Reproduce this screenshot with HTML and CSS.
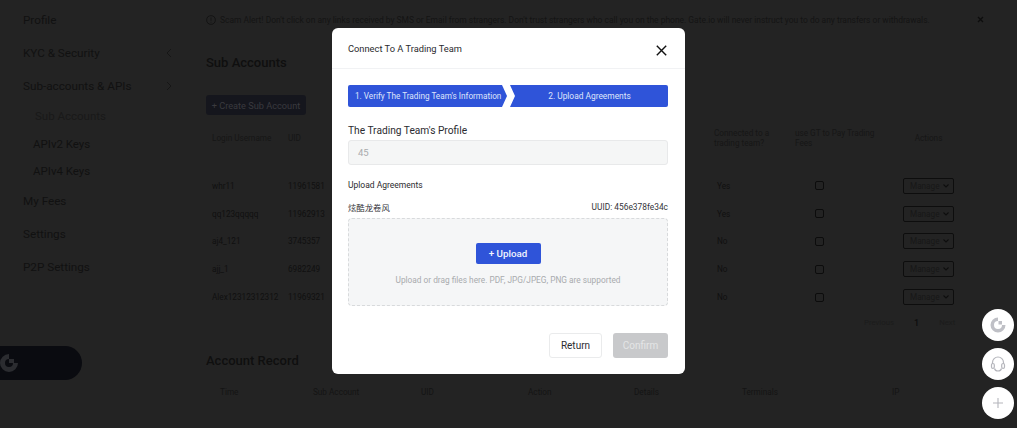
FILE: index.html
```html
<!DOCTYPE html>
<html lang="en">
<head>
<meta charset="utf-8">
<title>Sub Accounts</title>
<link rel="stylesheet" href="styles.css">
</head>
<body>
<div class="page">
  <nav class="sidebar">
    <a class="nav-item">Profile</a>
    <a class="nav-item">KYC &amp; Security<svg class="chev" width="6" height="10" viewBox="0 0 6 10"><path d="M5 1 1 5l4 4" fill="none" stroke="#161616" stroke-width="1"/></svg></a>
    <a class="nav-item">Sub-accounts &amp; APIs<svg class="chev" width="6" height="10" viewBox="0 0 6 10"><path d="M1 1l4 4-4 4" fill="none" stroke="#161616" stroke-width="1"/></svg></a>
    <div class="subnav">
      <a class="sub-item first">Sub Accounts</a>
      <a class="sub-item">APIv2 Keys</a>
      <a class="sub-item">APIv4 Keys</a>
    </div>
    <a class="nav-item">My Fees</a>
    <a class="nav-item">Settings</a>
    <a class="nav-item">P2P Settings</a>
  </nav>
  <main class="main">
    <div class="alert">
      <svg class="alert-icon" width="10" height="10" viewBox="0 0 10 10"><circle cx="5" cy="5" r="4.4" fill="none" stroke="#121212" stroke-width=".8"/><path d="M5 2.5v3.2M5 6.8v.8" stroke="#121212" stroke-width=".8"/></svg>
      <span class="alert-text">Scam Alert! Don't click on any links received by SMS or Email from strangers. Don't trust strangers who call you on the phone. Gate.io will never instruct you to do any transfers or withdrawals.</span>
      <svg class="alert-close" width="7" height="7" viewBox="0 0 7 7"><path d="M1 1l5 5M6 1 1 6" stroke="#0d0d0d" stroke-width="1.3"/></svg>
    </div>
    <h2 class="heading">Sub Accounts</h2>
    <button class="create">+ Create Sub Account</button>
    <div class="sub-table">
      <div class="row head">
        <span class="c-name">Login Username</span><span class="c-uid">UID</span>
        <span class="c-team">Connected to a trading team?</span><span class="c-gt">use GT to Pay Trading Fees</span><span class="c-act center">Actions</span>
      </div>
      <div class="row"><span class="c-name">whr11</span><span class="c-uid">11961581</span><span class="c-team ind">Yes</span><span class="c-gt"><i class="check"></i></span><span class="c-act"><span class="manage">Manage<svg width="6" height="4" viewBox="0 0 6 4"><path d="M.5.5 3 3 5.500.5" fill="none" stroke="#0e0e0e" stroke-width="1.100"/></svg></span></span></div>
      <div class="row"><span class="c-name">qq123qqqqq</span><span class="c-uid">11962913</span><span class="c-team ind">Yes</span><span class="c-gt"><i class="check"></i></span><span class="c-act"><span class="manage">Manage<svg width="6" height="4" viewBox="0 0 6 4"><path d="M.5.5 3 3 5.500.5" fill="none" stroke="#0e0e0e" stroke-width="1.100"/></svg></span></span></div>
      <div class="row"><span class="c-name">aj4_121</span><span class="c-uid">3745357</span><span class="c-team ind">No</span><span class="c-gt"><i class="check"></i></span><span class="c-act"><span class="manage">Manage<svg width="6" height="4" viewBox="0 0 6 4"><path d="M.5.5 3 3 5.500.5" fill="none" stroke="#0e0e0e" stroke-width="1.100"/></svg></span></span></div>
      <div class="row"><span class="c-name">ajj_1</span><span class="c-uid">6982249</span><span class="c-team ind">No</span><span class="c-gt"><i class="check"></i></span><span class="c-act"><span class="manage">Manage<svg width="6" height="4" viewBox="0 0 6 4"><path d="M.5.5 3 3 5.500.5" fill="none" stroke="#0e0e0e" stroke-width="1.100"/></svg></span></span></div>
      <div class="row"><span class="c-name">Alex12312312312</span><span class="c-uid">11969321</span><span class="c-team ind">No</span><span class="c-gt"><i class="check"></i></span><span class="c-act"><span class="manage">Manage<svg width="6" height="4" viewBox="0 0 6 4"><path d="M.5.5 3 3 5.500.5" fill="none" stroke="#0e0e0e" stroke-width="1.100"/></svg></span></span></div>
    </div>
    <div class="pager"><span>Previous</span><b>1</b><span>Next</span></div>
    <h2 class="heading record">Account Record</h2>
    <div class="record-head">
      <span>Time</span><span>Sub Account</span><span>UID</span><span>Action</span><span>Details</span><span>Terminals</span><span>IP</span>
    </div>
  </main>
</div>

<div class="pill">
  <svg width="22" height="22" viewBox="0 0 22 22"><path d="M11 20a9 9 0 1 1 0-18v5a4 4 0 1 0 4 4h5a9 9 0 0 1-9 9z" fill="#2b2c30" transform="translate(-2 0)"/><rect x="9" y="7" width="5" height="4" fill="#2b2c30"/></svg>
</div>

<div class="fabs">
  <button class="fab"><svg width="20" height="20" viewBox="0 0 20 20"><path d="M10 2.500a7.500 7.500 0 1 0 7.500 7.500H14a4 4 0 1 1-4-4z" fill="#bfc0c6"/><rect x="10.500" y="6" width="3.500" height="3.500" fill="#bfc0c6"/></svg></button>
  <button class="fab"><svg width="18" height="18" viewBox="0 0 18 18" fill="none" stroke="#b5b6bc" stroke-width="1.200"><path d="M3.500 9V7.500a5.500 5.500 0 0 1 11 0V9"/><rect x="2.500" y="8.500" width="2.800" height="5" rx="1.400"/><rect x="12.700" y="8.500" width="2.800" height="5" rx="1.400"/><path d="M5.500 13.500c.5 2 2 2.500 3.500 2.500s3-.5 3.500-2.500"/></svg></button>
  <button class="fab"><svg width="12" height="12" viewBox="0 0 12 12"><path d="M6 1v10M1 6h10" stroke="#b5b6bc" stroke-width="1.100"/></svg></button>
</div>

<div class="modal">
  <header class="modal-head">
    <span class="modal-title">Connect To A Trading Team</span>
    <svg width="11" height="11" viewBox="0 0 11 11"><path d="M.8.800l9.400 9.400M10.200.800.8 10.200" stroke="#111" stroke-width="1.400"/></svg>
  </header>
  <div class="modal-body">
    <div class="steps">
      <div class="step one">1. Verify The Trading Team's Information</div>
      <div class="step two">2. Upload Agreements</div>
    </div>
    <div class="label">The Trading Team's Profile</div>
    <div class="input">45</div>
    <div class="subtitle">Upload Agreements</div>
    <div class="file-row"><span class="cjk">炫酷龙卷风</span><span>UUID: 456e378fe34c</span></div>
    <div class="drop">
      <button class="upload">+ Upload</button>
      <p class="hint">Upload or drag files here. PDF, JPG/JPEG, PNG are supported</p>
    </div>
    <div class="actions">
      <button class="btn-return">Return</button>
      <button class="btn-confirm">Confirm</button>
    </div>
  </div>
</div>
</body>
</html>
```

FILE: styles.css
```css
* { box-sizing: border-box; }
html, body { margin: 0; height: 100%; overflow: hidden; }
body {
  background: #232323;
  color: #121212;
  font-family: Roboto, "Noto Sans CJK SC", sans-serif;
  position: relative;
}
button { font-family: Roboto, sans-serif; }
.page { display: flex; height: 428px; }
.sidebar {
  width: 206px;
  flex: none;
  padding: 4px 0 0 23px;
  display: flex;
  flex-direction: column;
}
.nav-item {
  height: 32.800px;
  width: 147px;
  display: flex;
  align-items: center;
  justify-content: space-between;
  font-size: 11.700px;
  color: #111;
  white-space: nowrap;
}
.subnav { display: flex; flex-direction: column; }
.sub-item { height: 27.500px; display: flex; align-items: center; padding-left: 10px; font-size: 11.500px; color: #111; }
.sub-item.first { padding-left: 12px; color: #191919; }
.chev { margin-right: -2px; }
.main { flex: 1; min-width: 0; display: flex; flex-direction: column; }
.alert { height: 13px; margin-top: 13px; display: flex; align-items: center; font-size: 8.450px; color: #141414; white-space: nowrap; }
.alert-icon { flex: none; margin-right: 4px; }
.alert-text { flex: none; width: 707px; }
.alert-close { margin-left: 50px; flex: none; }
.heading { margin: 0; font-size: 13px; line-height: 18px; font-weight: 500; color: #0f0f0f; }
.main > .heading:nth-of-type(1) { margin-top: 28px; }
.create {
  margin-top: 23px;
  width: 100px;
  height: 20px;
  border: 0;
  border-radius: 3px;
  background: #15161d;
  color: #3a3a3f;
  font-size: 9.200px;
  white-space: nowrap;
  padding: 0;
}
.sub-table { margin-top: 7px; margin-left: 6px; display: flex; flex-direction: column; }
.row { display: grid; grid-template-columns: 76px 426px 81px 108px 51px; align-items: center; height: 27.800px; font-size: 8.200px; color: #101010; }
.row.head { height: 32px; margin-bottom: 18px; color: #161616; line-height: 10px; }
.c-team { padding-right: 8px; }
.c-gt { padding-right: 20px; }
.ind { padding-left: 3px; }
.row:not(.head) .c-gt { padding-left: 20px; }
.center { text-align: center; }
.check { display: block; width: 9px; height: 9px; border: 1px solid #0c0c0c; border-radius: 2px; }
.manage {
  display: flex;
  align-items: center;
  justify-content: space-between;
  height: 16px;
  padding: 0 4px 0 6px;
  border: 1px solid #0d0d0d;
  border-radius: 2px;
  font-size: 8.200px;
  color: #171717;
}
.pager { margin-top: 5px; align-self: flex-end; display: flex; gap: 20px; align-items: center; width: 153px; font-size: 7.800px; color: #1b1b1b; height: 14px; }
.pager b { color: #0d0d0d; font-size: 9px; font-weight: 500; }
.heading.record { margin-top: 22px; }
.record-head { margin-top: 17px; margin-left: 14px; display: flex; font-size: 8.200px; color: #141414; }
.record-head span:nth-child(1) { width: 93px; }
.record-head span:nth-child(2) { width: 108px; }
.record-head span:nth-child(3) { width: 107px; }
.record-head span:nth-child(4) { width: 106px; }
.record-head span:nth-child(5) { width: 108px; }
.record-head span:nth-child(6) { width: 150px; }
.pill {
  position: absolute;
  left: 0;
  top: 346px;
  width: 82px;
  height: 34px;
  background: #0a0b10;
  border-radius: 0 17px 17px 0;
  display: flex;
  align-items: center;
}
.fabs { position: absolute; left: 982px; top: 309px; display: flex; flex-direction: column; gap: 7px; }
.fab { width: 32px; height: 32px; padding: 0; border: 0; border-radius: 50%; background: #fff; display: flex; align-items: center; justify-content: center; }
.modal {
  position: absolute;
  left: 332px;
  top: 28px;
  width: 353px;
  height: 346px;
  background: #fff;
  border-radius: 6px;
  display: flex;
  flex-direction: column;
}
.modal-head {
  height: 41px;
  flex: none;
  padding: 0 18px 0 16px;
  border-bottom: 1px solid #f1f2f4;
  display: flex;
  align-items: center;
  justify-content: space-between;
}
.modal-title { font-size: 9.300px; color: #2a2a2e; margin-top: 1px; }
.modal-head svg { margin-top: 5px; }
.modal-body { padding: 16px 17px 0 16px; display: flex; flex-direction: column; }
.steps { display: flex; height: 22px; gap: 0; }
.step { background: #2f54d9; color: #dfe5fb; font-size: 8.400px; display: flex; align-items: center; white-space: nowrap; }
.step.one { width: 159px; padding-left: 7px; font-size: 8.200px; border-radius: 2px 0 0 2px; clip-path: polygon(0 0, 154px 0, 159px 50%, 154px 100%, 0 100%); }
.step.two { width: 158px; margin-left: 3px; justify-content: center; padding-left: 1px; border-radius: 0 2px 2px 0; clip-path: polygon(0 0, 100% 0, 100% 100%, 0 100%, 5px 50%); }
.label { margin-top: 18px; font-size: 10.200px; line-height: 12px; color: #2b2b2f; }
.input {
  margin-top: 3px;
  height: 25px;
  padding-left: 9px;
  display: flex;
  align-items: center;
  background: #f5f6f6;
  border: 1px solid #e8e9ea;
  border-radius: 3px;
  font-size: 9.500px;
  color: #a9abad;
}
.subtitle { margin-top: 14px; font-size: 8.500px; line-height: 12px; color: #2b2b2f; }
.file-row { margin-top: 10px; height: 11px; display: flex; justify-content: space-between; align-items: center; font-size: 8.400px; color: #35353a; }
.cjk { font-family: "Noto Sans CJK SC", sans-serif; }
.drop {
  margin-top: 6px;
  height: 88px;
  background: #f5f6f7;
  border: 1px dashed #d8dadc;
  border-radius: 4px;
  display: flex;
  flex-direction: column;
  align-items: center;
  padding-top: 24px;
}
.upload { width: 65px; height: 21px; padding: 0; border: 0; border-radius: 2px; background: #2f54d9; color: #f2f4fe; font-size: 9.800px; font-weight: 500; }
.hint { margin: 11px 0 0; font-size: 8.300px; line-height: 11px; color: #a9abae; white-space: nowrap; }
.actions { margin-top: 27px; display: flex; justify-content: flex-end; gap: 11px; }
.btn-return { width: 53px; height: 25px; padding: 0; border: 1px solid #eaebec; border-radius: 3px; background: #fff; color: #2b2b2f; font-size: 10px; }
.btn-confirm { width: 55px; height: 25px; padding: 0; border: 0; border-radius: 3px; background: #c8c9cb; color: #e4e5e6; font-size: 10px; }
```
